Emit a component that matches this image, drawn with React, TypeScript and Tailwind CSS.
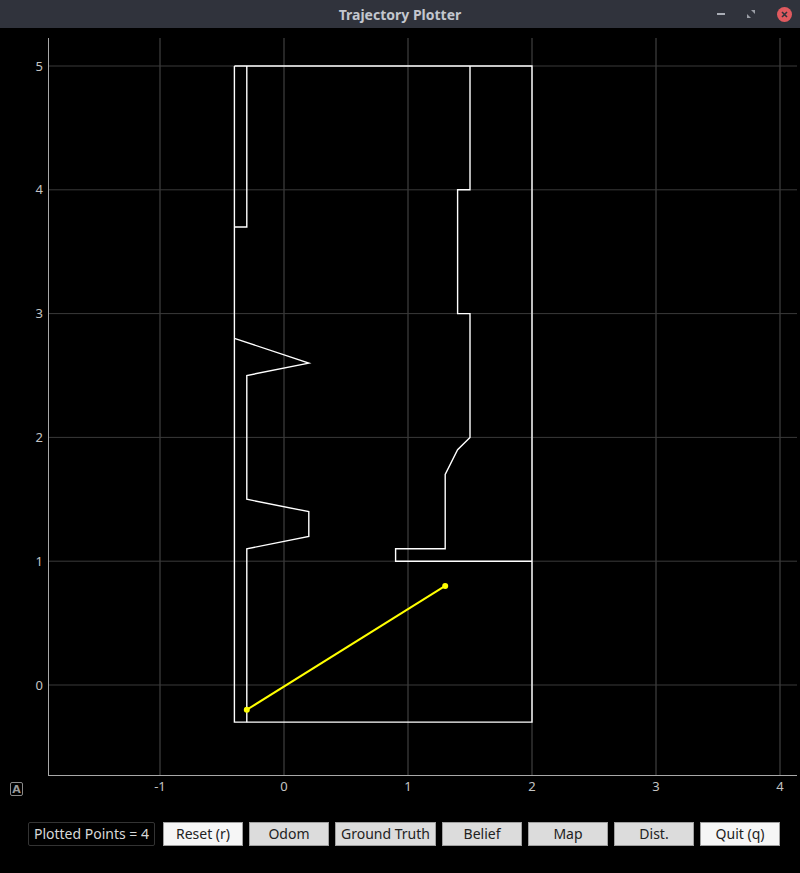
const X = (x: number) => 284 + 124 * x
const Y = (y: number) => 685 - 123.8 * y

const toPts = (pts: number[][]) => pts.map(([x, y]) => `${X(x)},${Y(y)}`).join(' ')

const walls = [
  [[-0.4, 5], [2, 5], [2, -0.3], [-0.4, -0.3], [-0.4, 5]],
  [[-0.3, 5], [-0.3, 3.7], [-0.4, 3.7]],
  [[-0.4, 2.8], [0.2, 2.6], [-0.3, 2.5], [-0.3, 1.5], [0.2, 1.4], [0.2, 1.2], [-0.3, 1.1], [-0.3, -0.3]],
  [[1.5, 5], [1.5, 4], [1.4, 4], [1.4, 3], [1.5, 3], [1.5, 2], [1.4, 1.9], [1.3, 1.7], [1.3, 1.1], [0.9, 1.1], [0.9, 1.0], [2, 1.0]],
]

const buttons = [
  { label: 'Reset (r)', w: 'w-[80px]', light: true },
  { label: 'Odom', w: 'w-[80px]', light: false },
  { label: 'Ground Truth', w: 'w-[101px]', light: false },
  { label: 'Belief', w: 'w-[80px]', light: false },
  { label: 'Map', w: 'w-[80px]', light: false },
  { label: 'Dist.', w: 'w-[80px]', light: false },
  { label: 'Quit (q)', w: 'w-[80px]', light: true },
]

function TitleBar() {
  return (
    <div className="relative flex items-center justify-center h-[28px] bg-[#30333c]">
      <span className="text-[14px] font-bold text-[#c3c7cf]">Trajectory Plotter</span>
      {/* window controls */}
      <div className="absolute right-[8px] top-0 h-full flex items-center gap-[18px]">
        <span className="block w-[8px] h-[2px] bg-[#a9adb5]" />
        <svg width="8" height="8" viewBox="0 0 8 8" className="mx-[4px]">
          <path d="M4 0H8V4Z M0 4V8H4Z" fill="#9a9ea6" />
        </svg>
        <span className="flex items-center justify-center w-[15px] h-[15px] rounded-full bg-[#e05a5f]">
          <svg width="7" height="7" viewBox="0 0 7 7">
            <path d="M1 1L6 6M6 1L1 6" stroke="#30333c" strokeWidth="1.6" />
          </svg>
        </span>
      </div>
    </div>
  )
}

function Plot() {
  const xs = [-1, 0, 1, 2, 3, 4]
  const ys = [0, 1, 2, 3, 4, 5]
  return (
    <svg width="800" height="782" viewBox="0 28 800 782" className="block">
      {/* grid */}
      {xs.map((v) => (
        <line key={'gx' + v} x1={X(v)} y1={38} x2={X(v)} y2={776} stroke="#4d4d4d" strokeWidth="1" />
      ))}
      {ys.map((v) => (
        <line key={'gy' + v} x1={48} y1={Y(v)} x2={797} y2={Y(v)} stroke="#3a3a3a" strokeWidth="1" />
      ))}
      {/* axes */}
      <line x1={48.5} y1={38} x2={48.5} y2={776} stroke="#a8a8a8" strokeWidth="1" />
      <line x1={48} y1={775.5} x2={797} y2={775.5} stroke="#a8a8a8" strokeWidth="1" />
      {ys.map((v) => (
        <text key={'ly' + v} x={43} y={Y(v) + 4.5} textAnchor="end" fontSize="13" fill="#c4c4c4" fontFamily="'Noto Sans', sans-serif">
          {v}
        </text>
      ))}
      {xs.map((v) => (
        <text key={'lx' + v} x={X(v)} y={791} textAnchor="middle" fontSize="13" fill="#c4c4c4" fontFamily="'Noto Sans', sans-serif">
          {v}
        </text>
      ))}
      {/* map walls */}
      {walls.map((w, i) => (
        <polyline key={i} points={toPts(w)} fill="none" stroke="#ffffff" strokeWidth="1.4" />
      ))}
      {/* trajectory */}
      <line x1={X(-0.3)} y1={Y(-0.2)} x2={X(1.3)} y2={Y(0.8)} stroke="#ffff00" strokeWidth="2" />
      <circle cx={X(-0.3)} cy={Y(-0.2)} r="3" fill="#ffff00" />
      <circle cx={X(1.3)} cy={Y(0.8)} r="3" fill="#ffff00" />
      {/* autoscale button */}
      <rect x={10.5} y={782.5} width={12} height={13} rx="1.5" fill="none" stroke="#8a8a8a" strokeWidth="1" />
      <text x={16.5} y={793} textAnchor="middle" fontSize="11" fontWeight="bold" fill="#9a9a9a" fontFamily="'DejaVu Sans', sans-serif">
        A
      </text>
    </svg>
  )
}

export default function App() {
  return (
    <div className="w-[800px] h-[873px] bg-black flex flex-col" style={{ fontFamily: "'Noto Sans', 'Open Sans', sans-serif" }}>
      <TitleBar />
      <Plot />
      {/* bottom controls */}
      <div className="flex items-center mt-[11px] pl-[28px] gap-[6px] h-[25px]">
        <div className="w-[127px] h-[24px] mr-[2px] flex items-center justify-center border border-[#333] rounded-[2px] text-[14px] text-[#d8d8d8]">
          Plotted Points = 4
        </div>
        {buttons.map((b) => (
          <button
            key={b.label}
            className={`${b.w} h-[24px] flex items-center justify-center border border-[#a0a0a0] text-[14px] text-[#222] ${b.light ? 'bg-[#f6f6f6]' : 'bg-[#dcdcdc]'}`}
          >
            {b.label}
          </button>
        ))}
      </div>
    </div>
  )
}
